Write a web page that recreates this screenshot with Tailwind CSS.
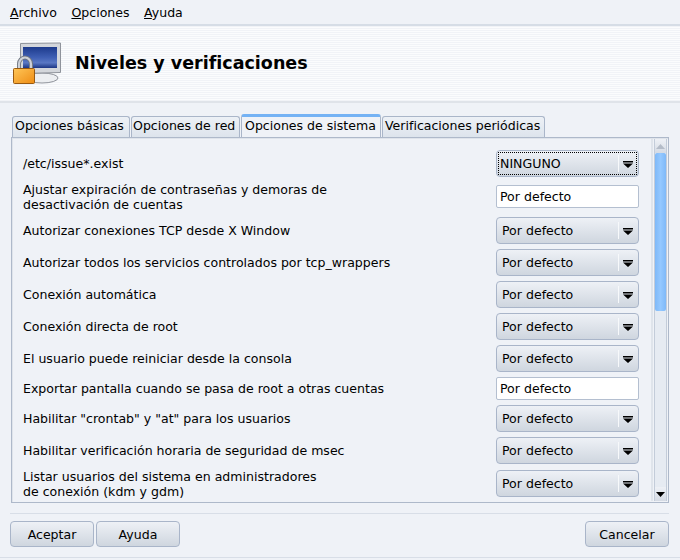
<!DOCTYPE html>
<html lang="es">
<head>
    <meta charset="UTF-8">
    <title>Niveles y verificaciones</title>
    <script src="https://cdn.jsdelivr.net/npm/@tailwindcss/browser@4"></script>
</head>
<body class="w-[680px] h-[560px] overflow-hidden bg-[#eff2f7] text-[12.55px] leading-[15px] text-black whitespace-nowrap font-['DejaVu_Sans',sans-serif]">
    <!-- menu -->
    <div class="h-[26px] flex items-center gap-[14.5px] pl-[10px] border-b-2 border-[#d6dde6]">
        <span><u>A</u>rchivo</span>
        <span><u>O</u>pciones</span>
        <span><u>A</u>yuda</span>
    </div>

    <!-- banner -->
    <div class="h-[77px] flex items-center pl-[12px] gap-[14px] border-b-2 border-[#dfe3e9] bg-[repeating-linear-gradient(180deg,#f1f3f7_0px,#f1f3f7_1px,#fbfcfd_1px,#fbfcfd_2px)]">
        <svg width="49" height="44" viewBox="0 0 49 44" class="shrink-0 mt-[1px]">
            <defs>
                <linearGradient id="scr" x1="0" y1="0" x2="0" y2="1">
                    <stop offset="0" stop-color="#1d3a8c"/>
                    <stop offset="0.5" stop-color="#3f5fb4"/>
                    <stop offset="0.75" stop-color="#5a78c4"/>
                    <stop offset="1" stop-color="#1c3684"/>
                </linearGradient>
                <linearGradient id="lock" x1="0" y1="0" x2="1" y2="1">
                    <stop offset="0" stop-color="#ffc658"/>
                    <stop offset="1" stop-color="#ee8c14"/>
                </linearGradient>
            </defs>
            <ellipse cx="30" cy="36" rx="16" ry="5" fill="#eceef1" stroke="#8f939b"/>
            <path d="M8.500 1.500 L48.500 1 L48.500 30.500 L8.500 31.500 Z" fill="#d3d6db" stroke="#8f939b"/>
            <rect x="11" y="5" width="34" height="21" fill="url(#scr)"/>
            <path d="M7 26 V22 a6 6.500 0 0 1 12 0 V26" fill="none" stroke="#6f7680" stroke-width="4"/>
            <path d="M7 26 V22 a6 6.500 0 0 1 12 0 V26" fill="none" stroke="#ccd0d8" stroke-width="2.200"/>
            <rect x="1.500" y="26.500" width="21" height="15" rx="1" fill="url(#lock)" stroke="#9a5a10"/>
        </svg>
        <h1 class="text-[17.5px] leading-[24px] font-bold -mt-[2px]">Niveles y verificaciones</h1>
    </div>

    <!-- tabs -->
    <div class="h-[34px] flex items-end pl-[12px] gap-[1px]">
        <div class="w-[118px] h-[21px] pl-[2px] pt-[1px] rounded-t-[3px] border border-b-0 border-[#aab6c9] bg-linear-to-b from-[#edf1f6] to-[#dde4ec]">Opciones básicas</div>
        <div class="w-[109px] h-[21px] pl-[1px] pt-[1px] rounded-t-[3px] border border-b-0 border-[#aab6c9] bg-linear-to-b from-[#edf1f6] to-[#dde4ec]">Opciones de red</div>
        <div class="w-[140px] h-[23px] pl-[3px] pt-[1px] rounded-t-[3px] border-t-[3px] border-x border-t-[#74b2f4] border-x-[#aab6c9] bg-[#eff2f7]">Opciones de sistema</div>
        <div class="w-[163px] h-[21px] pl-[2px] pt-[1px] rounded-t-[3px] border border-b-0 border-[#aab6c9] bg-linear-to-b from-[#edf1f6] to-[#dde4ec]">Verificaciones periódicas</div>
    </div>

    <!-- panel -->
    <div class="mx-[11px] w-[658px] h-[366px] flex border border-[#aeb9ca] p-px shadow-[inset_1px_1px_0_#dfe4eb]">
        <div class="w-[640px] shrink-0 pl-[10px] pr-[12px] pt-[11px] flex flex-col gap-[5px] border-r-2 border-[#dfe4eb]">
            <div class="h-[27px] shrink-0 flex items-center justify-between">
                <span>/etc/issue*.exist</span>
                <div class="w-[143px] h-[27px] relative flex items-center pl-[3px] rounded-[4px] border border-[#a9b5c9] bg-linear-to-b from-[#eef1f6] to-[#cfd6df]">
                    <span class="outline-1 outline-dotted outline-black absolute left-[2px] top-[2px] right-[2px] bottom-[2px]"></span>
                    <span>NINGUNO</span>
                    <span class="absolute right-[19px] top-[4px] bottom-[4px] w-px bg-[#f7f9fb]"></span>
                    <svg width="10" height="7" viewBox="0 0 10 7" class="absolute right-[5px] top-[10px]"><path d="M0 0H10V1.500H0Z M0 2.500H10L5 7Z" fill="#000"/></svg>
                </div>
            </div>
            <div class="h-[30px] shrink-0 flex items-center justify-between">
                <span>Ajustar expiración de contraseñas y demoras de<br>desactivación de cuentas</span>
                <div class="w-[143px] h-[23px] -mt-[1px] flex items-center pl-[3px] rounded-[2px] border border-[#b4bfd0] bg-white">Por defecto</div>
            </div>
            <div class="h-[27px] shrink-0 flex items-center justify-between">
                <span>Autorizar conexiones TCP desde X Window</span>
                <div class="w-[143px] h-[27px] relative flex items-center pl-[5px] rounded-[4px] border border-[#a9b5c9] bg-linear-to-b from-[#eef1f6] to-[#cfd6df]">
                    <span>Por defecto</span>
                    <span class="absolute right-[19px] top-[4px] bottom-[4px] w-px bg-[#f7f9fb]"></span>
                    <svg width="10" height="7" viewBox="0 0 10 7" class="absolute right-[5px] top-[10px]"><path d="M0 0H10V1.500H0Z M0 2.500H10L5 7Z" fill="#000"/></svg>
                </div>
            </div>
            <div class="h-[27px] shrink-0 flex items-center justify-between">
                <span>Autorizar todos los servicios controlados por tcp_wrappers</span>
                <div class="w-[143px] h-[27px] relative flex items-center pl-[5px] rounded-[4px] border border-[#a9b5c9] bg-linear-to-b from-[#eef1f6] to-[#cfd6df]">
                    <span>Por defecto</span>
                    <span class="absolute right-[19px] top-[4px] bottom-[4px] w-px bg-[#f7f9fb]"></span>
                    <svg width="10" height="7" viewBox="0 0 10 7" class="absolute right-[5px] top-[10px]"><path d="M0 0H10V1.500H0Z M0 2.500H10L5 7Z" fill="#000"/></svg>
                </div>
            </div>
            <div class="h-[27px] shrink-0 flex items-center justify-between">
                <span>Conexión automática</span>
                <div class="w-[143px] h-[27px] relative flex items-center pl-[5px] rounded-[4px] border border-[#a9b5c9] bg-linear-to-b from-[#eef1f6] to-[#cfd6df]">
                    <span>Por defecto</span>
                    <span class="absolute right-[19px] top-[4px] bottom-[4px] w-px bg-[#f7f9fb]"></span>
                    <svg width="10" height="7" viewBox="0 0 10 7" class="absolute right-[5px] top-[10px]"><path d="M0 0H10V1.500H0Z M0 2.500H10L5 7Z" fill="#000"/></svg>
                </div>
            </div>
            <div class="h-[27px] shrink-0 flex items-center justify-between">
                <span>Conexión directa de root</span>
                <div class="w-[143px] h-[27px] relative flex items-center pl-[5px] rounded-[4px] border border-[#a9b5c9] bg-linear-to-b from-[#eef1f6] to-[#cfd6df]">
                    <span>Por defecto</span>
                    <span class="absolute right-[19px] top-[4px] bottom-[4px] w-px bg-[#f7f9fb]"></span>
                    <svg width="10" height="7" viewBox="0 0 10 7" class="absolute right-[5px] top-[10px]"><path d="M0 0H10V1.500H0Z M0 2.500H10L5 7Z" fill="#000"/></svg>
                </div>
            </div>
            <div class="h-[27px] shrink-0 flex items-center justify-between">
                <span>El usuario puede reiniciar desde la consola</span>
                <div class="w-[143px] h-[27px] relative flex items-center pl-[5px] rounded-[4px] border border-[#a9b5c9] bg-linear-to-b from-[#eef1f6] to-[#cfd6df]">
                    <span>Por defecto</span>
                    <span class="absolute right-[19px] top-[4px] bottom-[4px] w-px bg-[#f7f9fb]"></span>
                    <svg width="10" height="7" viewBox="0 0 10 7" class="absolute right-[5px] top-[10px]"><path d="M0 0H10V1.500H0Z M0 2.500H10L5 7Z" fill="#000"/></svg>
                </div>
            </div>
            <div class="h-[23px] shrink-0 flex items-center justify-between">
                <span>Exportar pantalla cuando se pasa de root a otras cuentas</span>
                <div class="w-[143px] h-[23px] flex items-center pl-[3px] rounded-[2px] border border-[#b4bfd0] bg-white">Por defecto</div>
            </div>
            <div class="h-[27px] shrink-0 flex items-center justify-between">
                <span>Habilitar "crontab" y "at" para los usuarios</span>
                <div class="w-[143px] h-[27px] relative flex items-center pl-[5px] rounded-[4px] border border-[#a9b5c9] bg-linear-to-b from-[#eef1f6] to-[#cfd6df]">
                    <span>Por defecto</span>
                    <span class="absolute right-[19px] top-[4px] bottom-[4px] w-px bg-[#f7f9fb]"></span>
                    <svg width="10" height="7" viewBox="0 0 10 7" class="absolute right-[5px] top-[10px]"><path d="M0 0H10V1.500H0Z M0 2.500H10L5 7Z" fill="#000"/></svg>
                </div>
            </div>
            <div class="h-[27px] shrink-0 flex items-center justify-between">
                <span>Habilitar verificación horaria de seguridad de msec</span>
                <div class="w-[143px] h-[27px] relative flex items-center pl-[5px] rounded-[4px] border border-[#a9b5c9] bg-linear-to-b from-[#eef1f6] to-[#cfd6df]">
                    <span>Por defecto</span>
                    <span class="absolute right-[19px] top-[4px] bottom-[4px] w-px bg-[#f7f9fb]"></span>
                    <svg width="10" height="7" viewBox="0 0 10 7" class="absolute right-[5px] top-[10px]"><path d="M0 0H10V1.500H0Z M0 2.500H10L5 7Z" fill="#000"/></svg>
                </div>
            </div>
            <div class="h-[29px] shrink-0 flex items-center justify-between">
                <span>Listar usuarios del sistema en administradores<br>de conexión (kdm y gdm)</span>
                <div class="w-[143px] h-[27px] relative flex items-center pl-[5px] rounded-[4px] border border-[#a9b5c9] bg-linear-to-b from-[#eef1f6] to-[#cfd6df]">
                    <span>Por defecto</span>
                    <span class="absolute right-[19px] top-[4px] bottom-[4px] w-px bg-[#f7f9fb]"></span>
                    <svg width="10" height="7" viewBox="0 0 10 7" class="absolute right-[5px] top-[10px]"><path d="M0 0H10V1.500H0Z M0 2.500H10L5 7Z" fill="#000"/></svg>
                </div>
            </div>
        </div>
        <!-- scrollbar -->
        <div class="w-[15px] ml-[1px] flex flex-col bg-[#e6ebf2] border-x border-[#c3ccd9]">
            <div class="h-[14px] shrink-0 flex items-center justify-center bg-linear-to-b from-[#eef1f6] to-[#d5dbe4]">
                <svg width="9" height="5" viewBox="0 0 9 5"><path d="M4.500 0L9 5H0Z" fill="#b4bcc8"/></svg>
            </div>
            <div class="h-[158px] shrink-0 rounded-[2px] bg-linear-to-r from-[#7fb9f8] via-[#94c8ff] to-[#7fb9f8]"></div>
            <div class="flex-1"></div>
            <div class="h-[14px] shrink-0 flex items-center justify-center bg-linear-to-b from-[#eef1f6] to-[#d5dbe4]">
                <svg width="9" height="5" viewBox="0 0 9 5"><path d="M0 0H9L4.500 5Z" fill="#000"/></svg>
            </div>
        </div>
    </div>

    <!-- footer -->
    <div class="ml-[10px] mr-[11px] mt-[10px] pt-[7px] h-[44px] flex justify-between border-t border-[#d8dee7]">
        <div class="flex gap-[2px]">
            <div class="w-[84px] h-[26px] flex items-center justify-center rounded-[4px] border border-[#a9b5c9] bg-linear-to-b from-[#eef1f6] to-[#cfd6df]">Aceptar</div>
            <div class="w-[84px] h-[26px] flex items-center justify-center rounded-[4px] border border-[#a9b5c9] bg-linear-to-b from-[#eef1f6] to-[#cfd6df]">Ayuda</div>
        </div>
        <div class="w-[84px] h-[26px] flex items-center justify-center rounded-[4px] border border-[#a9b5c9] bg-linear-to-b from-[#eef1f6] to-[#cfd6df]">Cancelar</div>
    </div>
    <div class="h-px bg-[#d8dee7]"></div>
</body>
</html>
